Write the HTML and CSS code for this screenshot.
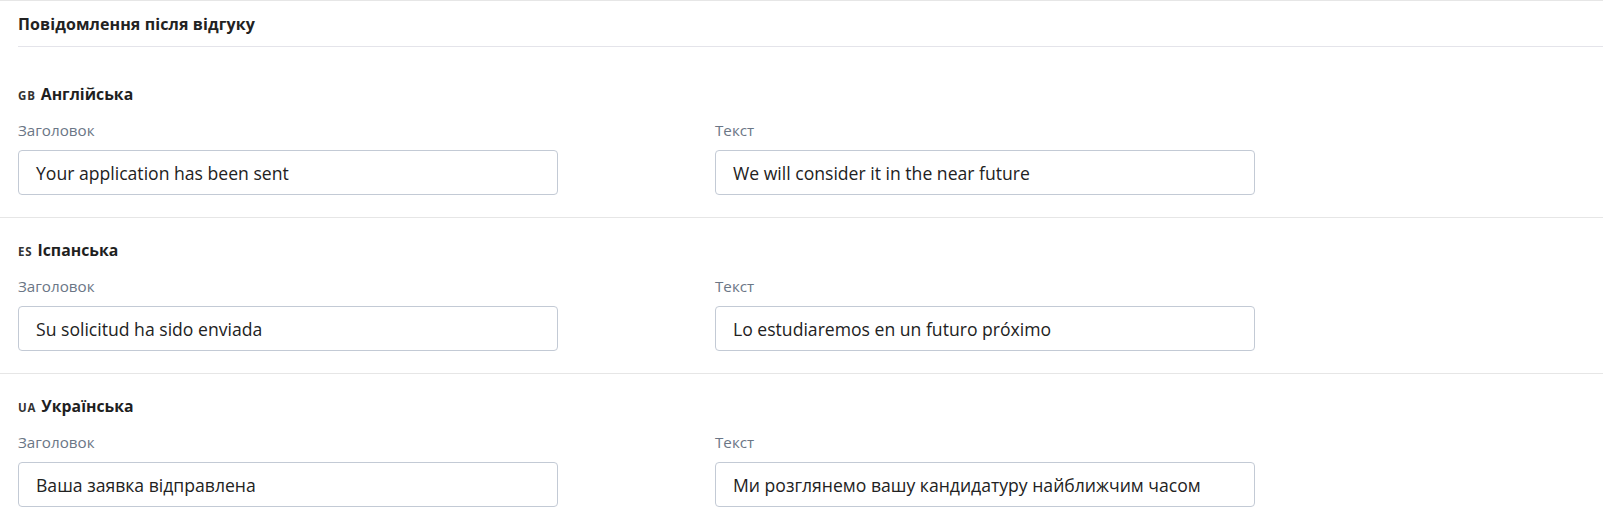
FILE: index.html
```html
<!DOCTYPE html>
<html lang="uk">
<head>
<meta charset="utf-8">
<link rel="stylesheet" href="styles.css">
</head>
<body>
<div class="panel">
  <div class="panel-header">
    <h2 class="panel-title">Повідомлення після відгуку</h2>
  </div>
  <div class="lang lang-first">
    <h3 class="lang-title"><span class="code">GB</span> Англійська</h3>
    <div class="fields">
      <div class="field">
        <div class="label">Заголовок</div>
        <div class="input">Your application has been sent</div>
      </div>
      <div class="field">
        <div class="label">Текст</div>
        <div class="input">We will consider it in the near future</div>
      </div>
    </div>
  </div>
  <div class="lang">
    <h3 class="lang-title"><span class="code">ES</span> Іспанська</h3>
    <div class="fields">
      <div class="field">
        <div class="label">Заголовок</div>
        <div class="input">Su solicitud ha sido enviada</div>
      </div>
      <div class="field">
        <div class="label">Текст</div>
        <div class="input">Lo estudiaremos en un futuro próximo</div>
      </div>
    </div>
  </div>
  <div class="lang lang-last">
    <h3 class="lang-title"><span class="code">UA</span> Українська</h3>
    <div class="fields">
      <div class="field">
        <div class="label">Заголовок</div>
        <div class="input">Ваша заявка відправлена</div>
      </div>
      <div class="field">
        <div class="label">Текст</div>
        <div class="input">Ми розглянемо вашу кандидатуру найближчим часом</div>
      </div>
    </div>
  </div>
</div>
</body>
</html>
```
FILE: styles.css
```css
* { box-sizing: border-box; }
html, body { margin: 0; padding: 0; background: #fff; }
body { font-family: "Open Sans", "Noto Sans", sans-serif; color: #222; }

.panel { border-top: 1px solid #e6e6e6; }

.panel-header {
  margin-left: 18px;
  height: 46px;
  border-bottom: 1px solid #e4e4ea;
  display: flex;
  align-items: center;
}
.panel-title {
  margin: 0;
  font-weight: 700;
  font-size: 16px;
  line-height: 22px;
  letter-spacing: 0.1px;
  color: #222;
}

.lang {
  padding: 20px 0 22px 18px;
  border-bottom: 1px solid #e6e6e6;
}
.lang-first { padding-top: 35px; }
.lang-last { border-bottom: none; }

.lang-title {
  margin: 0;
  font-size: 15.8px;
  line-height: 25px;
  font-weight: 700;
  color: #1f1f1f;
}
.code {
  font-size: 11.5px;
  font-weight: 700;
  letter-spacing: 0.8px;
  color: #333;
  margin-right: 1px;
}

.fields {
  display: grid;
  grid-template-columns: 540px 540px;
  column-gap: 157px;
  margin-top: 12px;
}
.label {
  font-size: 15.2px;
  line-height: 20px;
  color: #6b7686;
  margin-bottom: 10px;
}
.input {
  height: 45px;
  border: 1px solid #c3cad5;
  border-radius: 4px;
  padding: 0 17px;
  display: flex;
  align-items: center;
  font-size: 17.6px;
  color: #222;
}
```
